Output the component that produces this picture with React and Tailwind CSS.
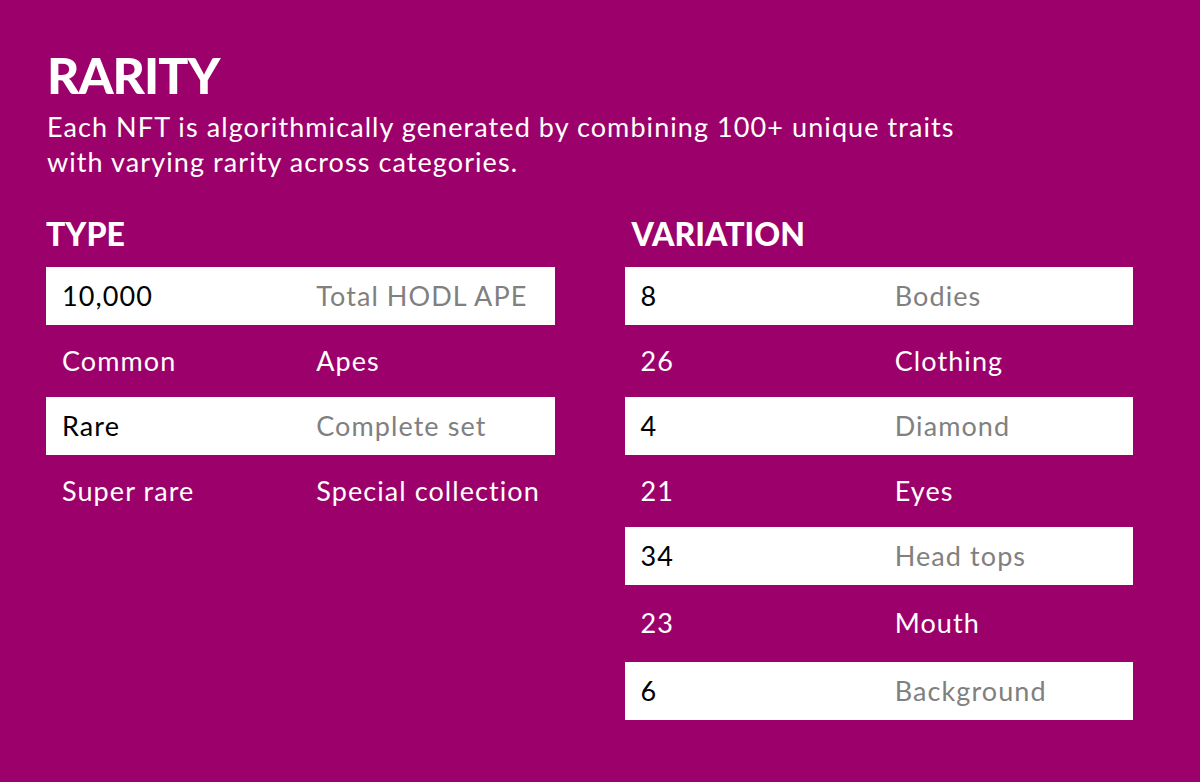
const typeRows = [
  ['10,000', 'Total HODL APE'],
  ['Common', 'Apes'],
  ['Rare', 'Complete set'],
  ['Super rare', 'Special collection'],
]

const variationRows = [
  ['8', 'Bodies'],
  ['26', 'Clothing'],
  ['4', 'Diamond'],
  ['21', 'Eyes'],
  ['34', 'Head tops'],
  ['23', 'Mouth', 'h-[77px]'],
  ['6', 'Background'],
]

function Table({ title, rows, indent }) {
  return (
    <div>
      <h2 className={`text-[32px] font-black leading-none text-white ${indent ? 'pl-[7px]' : ''}`}>
        {title}
      </h2>
      <div className="mt-[17px]">
        {rows.map(([a, b, h], i) => {
          const filled = i % 2 === 0
          return (
            <div
              key={a}
              className={`grid grid-cols-2 items-center whitespace-nowrap text-[27px] tracking-[0.04em] ${
                filled ? 'h-[58px] bg-white' : h || 'h-[72px]'
              }`}
            >
              <span className={`px-4 ${filled ? 'text-black' : 'text-white'}`}>{a}</span>
              <span className={`px-4 ${filled ? 'text-[#808080]' : 'text-white'}`}>{b}</span>
            </div>
          )
        })}
      </div>
    </div>
  )
}

export default function App() {
  return (
    <div
      className="min-h-screen bg-[#9c016b] pl-[46px] pr-[67px] pt-[50px]"
      style={{ fontFamily: 'Lato, "Noto Sans", sans-serif' }}
    >
      <h1 className="pl-px text-[50px] font-black leading-none tracking-[-0.02em] text-white">
        RARITY
      </h1>
      <p className="mt-[9px] pl-px text-[27px] leading-[35px] tracking-[0.04em] text-white">
        Each NFT is algorithmically generated by combining 100+ unique traits
        <br />
        with varying rarity across categories.
      </p>
      <div className="mt-[39px] grid grid-cols-2 gap-[70px]">
        <Table title="TYPE" rows={typeRows} />
        <Table title="VARIATION" rows={variationRows} indent />
      </div>
    </div>
  )
}
